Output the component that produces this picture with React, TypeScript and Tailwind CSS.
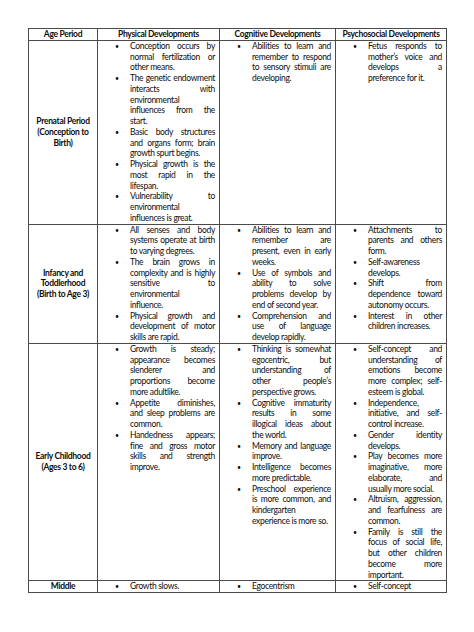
import React from "react";

type Bullet = string[];

interface Row {
  age: string[];
  physical: Bullet[];
  cognitive: Bullet[];
  psychosocial: Bullet[];
}

const rows: Row[] = [
  {
    age: ["Prenatal Period", "(Conception to", "Birth)"],
    physical: [
      ["Conception occurs by", "normal fertilization or", "other means."],
      ["The genetic endowment", "interacts with", "environmental", "influences from the", "start."],
      ["Basic body structures", "and organs form; brain", "growth spurt begins."],
      ["Physical growth is the", "most rapid in the", "lifespan."],
      ["Vulnerability to", "environmental", "influences is great."],
    ],
    cognitive: [["Abilities to learn and", "remember to respond", "to sensory stimuli are", "developing."]],
    psychosocial: [["Fetus responds to", "mother’s voice and", "develops a", "preference for it."]],
  },
  {
    age: ["Infancy and", "Toddlerhood", "(Birth to Age 3)"],
    physical: [
      ["All senses and body", "systems operate at birth", "to varying degrees."],
      ["The brain grows in", "complexity and is highly", "sensitive to", "environmental", "influence."],
      ["Physical growth and", "development of motor", "skills are rapid."],
    ],
    cognitive: [
      ["Abilities to learn and", "remember are", "present, even in early", "weeks."],
      ["Use of symbols and", "ability to solve", "problems develop by", "end of second year."],
      ["Comprehension and", "use of language", "develop rapidly."],
    ],
    psychosocial: [
      ["Attachments to", "parents and others", "form."],
      ["Self-awareness", "develops."],
      ["Shift from", "dependence toward", "autonomy occurs."],
      ["Interest in other", "children increases."],
    ],
  },
  {
    age: ["Early Childhood", "(Ages 3 to 6)"],
    physical: [
      ["Growth is steady;", "appearance becomes", "slenderer and", "proportions become", "more adultlike."],
      ["Appetite diminishes,", "and sleep problems are", "common."],
      ["Handedness appears;", "fine and gross motor", "skills and strength", "improve."],
    ],
    cognitive: [
      ["Thinking is somewhat", "egocentric, but", "understanding of", "other people’s", "perspective grows."],
      ["Cognitive immaturity", "results in some", "illogical ideas about", "the world."],
      ["Memory and language", "improve."],
      ["Intelligence becomes", "more predictable."],
      ["Preschool experience", "is more common, and", "kindergarten", "experience is more so."],
    ],
    psychosocial: [
      ["Self-concept and", "understanding of", "emotions become", "more complex; self-", "esteem is global."],
      ["Independence,", "initiative, and self-", "control increase."],
      ["Gender identity", "develops."],
      ["Play becomes more", "imaginative, more", "elaborate, and", "usually more social."],
      ["Altruism, aggression,", "and fearfulness are", "common."],
      ["Family is still the", "focus of social life,", "but other children", "become more", "important."],
    ],
  },
  {
    age: ["Middle"],
    physical: [["Growth slows."]],
    cognitive: [["Egocentrism"]],
    psychosocial: [["Self-concept"]],
  },
];

const cell = "border-r border-b border-[#4a4a4a]";

function BulletList({ items }: { items: Bullet[] }) {
  return (
    <div className={`${cell} pl-[17px] pr-[4px]`}>
      {items.map((lines, i) => (
        <div key={i} className="flex">
          <span className="w-[15px] shrink-0 text-[7px]">•</span>
          <div className="flex-1 min-w-0">
            {lines.map((line, j) => (
              <span
                key={j}
                className={
                  j < lines.length - 1
                    ? "block whitespace-nowrap text-justify [text-align-last:justify]"
                    : "block whitespace-nowrap"
                }
              >
                {line}
              </span>
            ))}
          </div>
        </div>
      ))}
    </div>
  );
}

export default function App() {
  return (
    <div className="min-h-screen bg-white pt-[28px] pl-[28px] text-[#0d0d0d] font-['Lato',sans-serif] text-[8.5px] leading-[10.75px] tracking-[-0.32px]">
      <div className="grid w-[419px] grid-cols-[69px_122px_116px_111px] border-l border-t border-[#4a4a4a]">
        {["Age Period", "Physical Developments", "Cognitive Developments", "Psychosocial Developments"].map((h) => (
          <div key={h} className={`${cell} text-center font-bold`}>
            {h}
          </div>
        ))}
        {rows.map((r) => (
          <React.Fragment key={r.age[0]}>
            <div className={`${cell} flex flex-col items-center justify-center text-center font-bold`}>
              {r.age.map((a) => (
                <span key={a}>{a}</span>
              ))}
            </div>
            <BulletList items={r.physical} />
            <BulletList items={r.cognitive} />
            <BulletList items={r.psychosocial} />
          </React.Fragment>
        ))}
      </div>
    </div>
  );
}
